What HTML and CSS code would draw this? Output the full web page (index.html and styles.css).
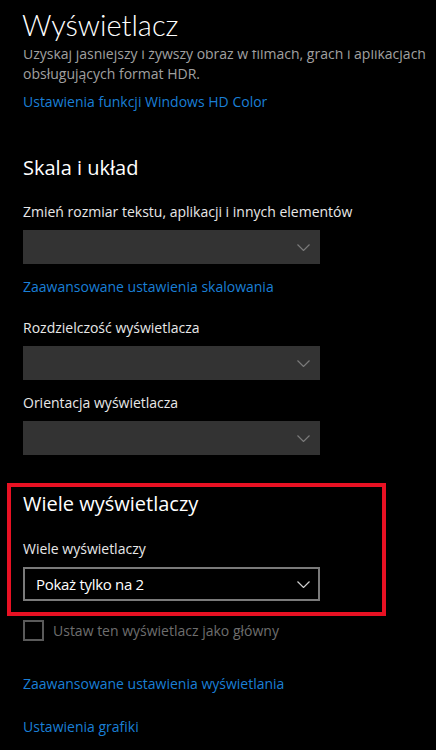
FILE: index.html
```html
<!DOCTYPE html>
<html lang="pl">
<head>
<meta charset="utf-8">
<title>Wyświetlacz</title>
<link rel="stylesheet" href="styles.css">
</head>
<body>
<div class="page">
  <header class="page-header">
    <h1 class="page-title">Wyświetlacz</h1>
  </header>
  <div class="scroller">
    <div class="content">
      <p class="desc">Uzyskaj jaśniejszy i żywszy obraz w filmach, grach i aplikacjach obsługujących format HDR.</p>
      <a class="link link-hdr" href="#">Ustawienia funkcji Windows HD Color</a>

      <h2 class="section-title">Skala i układ</h2>
      <div class="field">
        <div class="label">Zmień rozmiar tekstu, aplikacji i innych elementów</div>
        <div class="select select-disabled">
          <span class="select-value"></span>
          <svg class="chevron" width="13" height="7" viewBox="0 0 13 7"><path d="M0.5 0.5 L6.5 6.5 L12.5 0.5" fill="none" stroke="currentColor" stroke-width="1.2"/></svg>
        </div>
      </div>
      <a class="link link-scale" href="#">Zaawansowane ustawienia skalowania</a>
      <div class="field field-res">
        <div class="label">Rozdzielczość wyświetlacza</div>
        <div class="select select-disabled">
          <span class="select-value"></span>
          <svg class="chevron" width="13" height="7" viewBox="0 0 13 7"><path d="M0.5 0.5 L6.5 6.5 L12.5 0.5" fill="none" stroke="currentColor" stroke-width="1.2"/></svg>
        </div>
      </div>
      <div class="field field-orient">
        <div class="label">Orientacja wyświetlacza</div>
        <div class="select select-disabled">
          <span class="select-value"></span>
          <svg class="chevron" width="13" height="7" viewBox="0 0 13 7"><path d="M0.5 0.5 L6.5 6.5 L12.5 0.5" fill="none" stroke="currentColor" stroke-width="1.2"/></svg>
        </div>
      </div>

      <section class="highlight">
        <h2 class="section-title section-title-multi">Wiele wyświetlaczy</h2>
        <div class="field field-multi">
          <div class="label">Wiele wyświetlaczy</div>
          <div class="select select-active">
            <span class="select-value">Pokaż tylko na 2</span>
            <svg class="chevron" width="13" height="7" viewBox="0 0 13 7"><path d="M0.5 0.5 L6.5 6.5 L12.5 0.5" fill="none" stroke="currentColor" stroke-width="1.2"/></svg>
          </div>
        </div>
      </section>

      <div class="checkbox-row">
        <span class="checkbox"></span>
        <span class="checkbox-label">Ustaw ten wyświetlacz jako główny</span>
      </div>

      <a class="link link-adv" href="#">Zaawansowane ustawienia wyświetlania</a>
      <a class="link link-gfx" href="#">Ustawienia grafiki</a>
    </div>
  </div>
</div>
</body>
</html>
```

FILE: styles.css
```css
* { box-sizing: border-box; }

html, body {
  margin: 0;
  padding: 0;
  background: #000;
}

body {
  font-family: "Open Sans", "Noto Sans", sans-serif;
  font-size: 14px;
  line-height: 20px;
  color: #fff;
}

.page {
  width: 436px;
  height: 750px;
  overflow: hidden;
  display: flex;
  flex-direction: column;
}

.page-header {
  height: 50px;
  flex: none;
  padding: 5px 22px 0;
  background: #000;
}

.page-title {
  margin: 0;
  font-family: "Lato", "Open Sans", sans-serif;
  font-size: 29px;
  line-height: 40px;
  font-weight: 300;
  color: #fff;
}

.scroller {
  flex: 1;
  overflow: hidden;
}

.content {
  margin-top: -6px;
  padding: 0 23px;
  display: flex;
  flex-direction: column;
  align-items: flex-start;
}

.desc {
  margin: 0;
  color: #a0a0a0;
  width: 410px;
}

.link {
  color: #1a7fd6;
  text-decoration: none;
}

.link-hdr { margin-top: 8px; }

.section-title {
  margin: 42px 0 0;
  font-size: 20px;
  line-height: 28px;
  font-weight: 400;
  color: #fff;
}

.field {
  margin-top: 20px;
  display: flex;
  flex-direction: column;
}

.label {
  color: #e8e8e8;
  margin-bottom: 8px;
}

.select {
  width: 297px;
  height: 34px;
  display: flex;
  align-items: center;
  justify-content: space-between;
  padding: 0 10px 0 13px;
}

.select-disabled {
  background: #333;
  color: #7a7a7a;
}

.select-active {
  border: 2px solid #7a7a7a;
  padding: 0 8px 0 11px;
  color: #cfcfcf;
}

.select-value {
  color: #fff;
  font-size: 15px;
  letter-spacing: -0.3px;
}

.chevron {
  display: block;
  margin-top: 1px;
}

.link-scale { margin-top: 13px; }

.field-res { margin-top: 21px; }
.field-orient { margin-top: 13px; }

.highlight {
  width: 379px;
  margin: 28px 0 0 -16px;
  border: 4px solid #e81123;
  padding: 3px 12px 11px;
  display: flex;
  flex-direction: column;
}

.section-title-multi { margin-top: 0; }
.field-multi { margin-top: 21px; }

.checkbox-row {
  margin-top: 4px;
  display: flex;
  align-items: center;
  gap: 9px;
}

.checkbox {
  width: 21px;
  height: 21px;
  border: 2px solid #5a5a5a;
}

.checkbox-label {
  color: #6e6e6e;
}

.link-adv { margin-top: 33px; }
.link-gfx { margin-top: 23px; }
```
